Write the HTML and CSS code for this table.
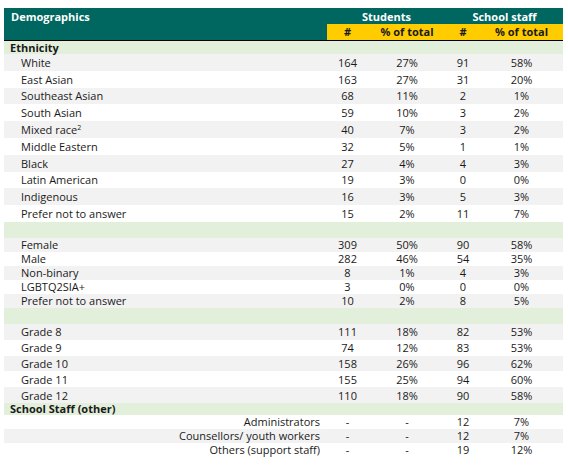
FILE: index.html
```html
<!DOCTYPE html>
<html lang="en">
<head>
    <meta charset="UTF-8">
    <meta name="viewport" content="width=device-width, initial-scale=1.0">
    <title>Demographics</title>
    <link rel="stylesheet" href="styles.css">
</head>
<body>
    <table class="demo-table">
        <colgroup>
            <col class="col-label">
            <col class="col-snum">
            <col class="col-spct">
            <col class="col-tnum">
            <col class="col-tpct">
        </colgroup>
        <thead>
            <tr class="head-top">
                <th class="title" rowspan="2">Demographics</th>
                <th colspan="2">Students</th>
                <th colspan="2">School staff</th>
            </tr>
            <tr class="head-sub">
                <th>#</th>
                <th>% of total</th>
                <th>#</th>
                <th>% of total</th>
            </tr>
        </thead>
        <tbody>
            <!-- Ethnicity -->
            <tr class="section"><td colspan="5">Ethnicity</td></tr>
            <tr class="row tall alt"><td class="label">White</td><td>164</td><td>27%</td><td>91</td><td>58%</td></tr>
            <tr class="row tall"><td class="label">East Asian</td><td>163</td><td>27%</td><td>31</td><td>20%</td></tr>
            <tr class="row tall alt"><td class="label">Southeast Asian</td><td>68</td><td>11%</td><td>2</td><td>1%</td></tr>
            <tr class="row tall"><td class="label">South Asian</td><td>59</td><td>10%</td><td>3</td><td>2%</td></tr>
            <tr class="row tall alt"><td class="label">Mixed race<sup>2</sup></td><td>40</td><td>7%</td><td>3</td><td>2%</td></tr>
            <tr class="row tall"><td class="label">Middle Eastern</td><td>32</td><td>5%</td><td>1</td><td>1%</td></tr>
            <tr class="row tall alt"><td class="label">Black</td><td>27</td><td>4%</td><td>4</td><td>3%</td></tr>
            <tr class="row tall"><td class="label">Latin American</td><td>19</td><td>3%</td><td>0</td><td>0%</td></tr>
            <tr class="row tall alt"><td class="label">Indigenous</td><td>16</td><td>3%</td><td>5</td><td>3%</td></tr>
            <tr class="row tall"><td class="label">Prefer not to answer</td><td>15</td><td>2%</td><td>11</td><td>7%</td></tr>

            <!-- Gender -->
            <tr class="section spacer"><td colspan="5"></td></tr>
            <tr class="row short alt"><td class="label">Female</td><td>309</td><td>50%</td><td>90</td><td>58%</td></tr>
            <tr class="row short"><td class="label">Male</td><td>282</td><td>46%</td><td>54</td><td>35%</td></tr>
            <tr class="row short alt"><td class="label">Non-binary</td><td>8</td><td>1%</td><td>4</td><td>3%</td></tr>
            <tr class="row short"><td class="label">LGBTQ2SIA+</td><td>3</td><td>0%</td><td>0</td><td>0%</td></tr>
            <tr class="row short alt"><td class="label">Prefer not to answer</td><td>10</td><td>2%</td><td>8</td><td>5%</td></tr>

            <!-- Grade -->
            <tr class="section spacer"><td colspan="5"></td></tr>
            <tr class="row mid alt"><td class="label">Grade 8</td><td>111</td><td>18%</td><td>82</td><td>53%</td></tr>
            <tr class="row mid"><td class="label">Grade 9</td><td>74</td><td>12%</td><td>83</td><td>53%</td></tr>
            <tr class="row mid alt"><td class="label">Grade 10</td><td>158</td><td>26%</td><td>96</td><td>62%</td></tr>
            <tr class="row mid"><td class="label">Grade 11</td><td>155</td><td>25%</td><td>94</td><td>60%</td></tr>
            <tr class="row mid alt"><td class="label">Grade 12</td><td>110</td><td>18%</td><td>90</td><td>58%</td></tr>

            <!-- Staff -->
            <tr class="section staff"><td colspan="5">School Staff (other)</td></tr>
            <tr class="row short"><td class="label right">Administrators</td><td>-</td><td>-</td><td>12</td><td>7%</td></tr>
            <tr class="row short alt"><td class="label right">Counsellors/ youth workers</td><td>-</td><td>-</td><td>12</td><td>7%</td></tr>
            <tr class="row short"><td class="label right">Others (support staff)</td><td>-</td><td>-</td><td>19</td><td>12%</td></tr>
        </tbody>
    </table>
</body>
</html>
```

FILE: styles.css
```css
* {
    box-sizing: border-box;
}

body {
    margin: 8px 5px 0 4px;
    background-color: #fff;
    color: #1a1a1a;
    font-family: "Open Sans", "Noto Sans", sans-serif;
    font-size: 11px;
}

.demo-table {
    width: 559px;
    border-collapse: collapse;
    table-layout: fixed;
}

.col-label { width: 323px; }
.col-snum { width: 41px; }
.col-spct { width: 78px; }
.col-tnum { width: 34px; }
.col-tpct { width: 83px; }

.demo-table th,
.demo-table td {
    padding: 0;
    line-height: 1;
    white-space: nowrap;
}

/* Header */
.head-top th {
    height: 16px;
    background-color: #006660;
    color: #fff;
    font-weight: bold;
    text-align: center;
}

.head-top .title {
    text-align: left;
    vertical-align: top;
    padding: 3px 0 0 7px;
    border-bottom: 1px solid #000;
}

.head-sub th {
    height: 16px;
    background-color: #ffcc00;
    color: #1a1a1a;
    font-weight: bold;
    text-align: center;
    border-bottom: 1px solid #000;
}

/* Section rows */
.section td {
    height: 14px;
    background-color: #e2efda;
    font-weight: bold;
    padding-left: 6px;
}

.section.spacer td {
    height: 16px;
}

.section.staff td {
    height: 12px;
}

/* Data rows */
.row td {
    text-align: center;
}

.row.alt td {
    background-color: #f2f2f2;
}

.row.tall td { height: 16.8px; }
.row.mid td { height: 15.8px; }
.row.short td { height: 14px; }

.row .label {
    text-align: left;
    padding-left: 17px;
}

.row .label.right {
    text-align: right;
    padding-right: 7px;
}

sup {
    font-size: 7px;
    vertical-align: top;
    line-height: 1;
}
```
